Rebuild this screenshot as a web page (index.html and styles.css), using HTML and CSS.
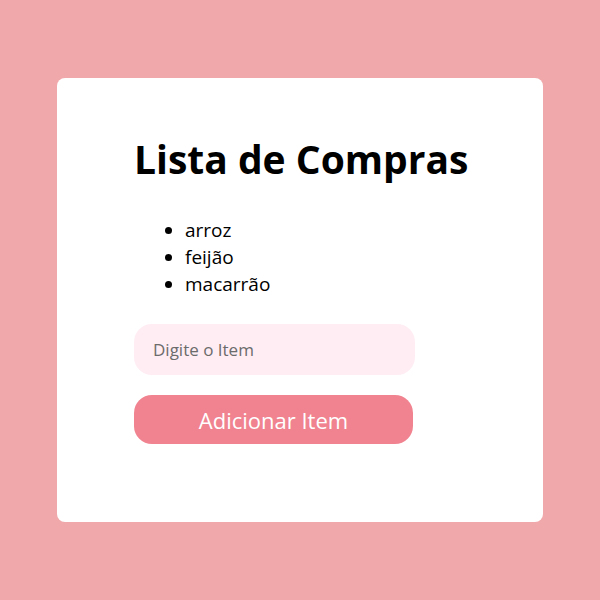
FILE: index.html
```html
<!DOCTYPE html>
<html lang="pt-BR">
<head>
<meta charset="utf-8">
<title>Lista de Compras</title>
<link rel="stylesheet" href="styles.css">
</head>
<body>
<main class="card">
  <h1 class="title">Lista de Compras</h1>
  <ul class="list">
    <li>arroz</li>
    <li>feijão</li>
    <li>macarrão</li>
  </ul>
  <input class="field" type="text" placeholder="Digite o Item">
  <button class="add">Adicionar Item</button>
</main>
</body>
</html>
```
FILE: styles.css
```css
html, body {
  margin: 0;
  height: 100%;
}
body {
  background: #f0a8ab;
  display: flex;
  align-items: center;
  justify-content: center;
  font-family: "Open Sans", "Noto Sans", sans-serif;
}
.card {
  box-sizing: border-box;
  width: 486px;
  height: 444px;
  background: #ffffff;
  border-radius: 8px;
  padding: 50px 40px 0 77px;
  display: flex;
  flex-direction: column;
  align-items: flex-start;
}
.title {
  margin: 0;
  font-size: 39px;
  font-weight: 700;
  color: #000;
  line-height: 61px;
  white-space: nowrap;
}
.list {
  margin: 28px 0 0;
  padding-left: 51px;
  font-size: 19px;
  line-height: 27px;
  color: #000;
}
.field {
  box-sizing: border-box;
  margin-top: 26px;
  width: 281px;
  height: 51px;
  border: none;
  border-radius: 18px;
  background: #ffedf3;
  padding: 0 19px;
  font-family: inherit;
  font-size: 17px;
  outline: none;
}
.field::placeholder {
  color: #6b6b6b;
}
.add {
  box-sizing: border-box;
  margin-top: 20px;
  width: 279px;
  height: 49px;
  border: none;
  border-radius: 18px;
  background: #f0838f;
  color: #ffffff;
  font-family: inherit;
  font-size: 22px;
}
```
